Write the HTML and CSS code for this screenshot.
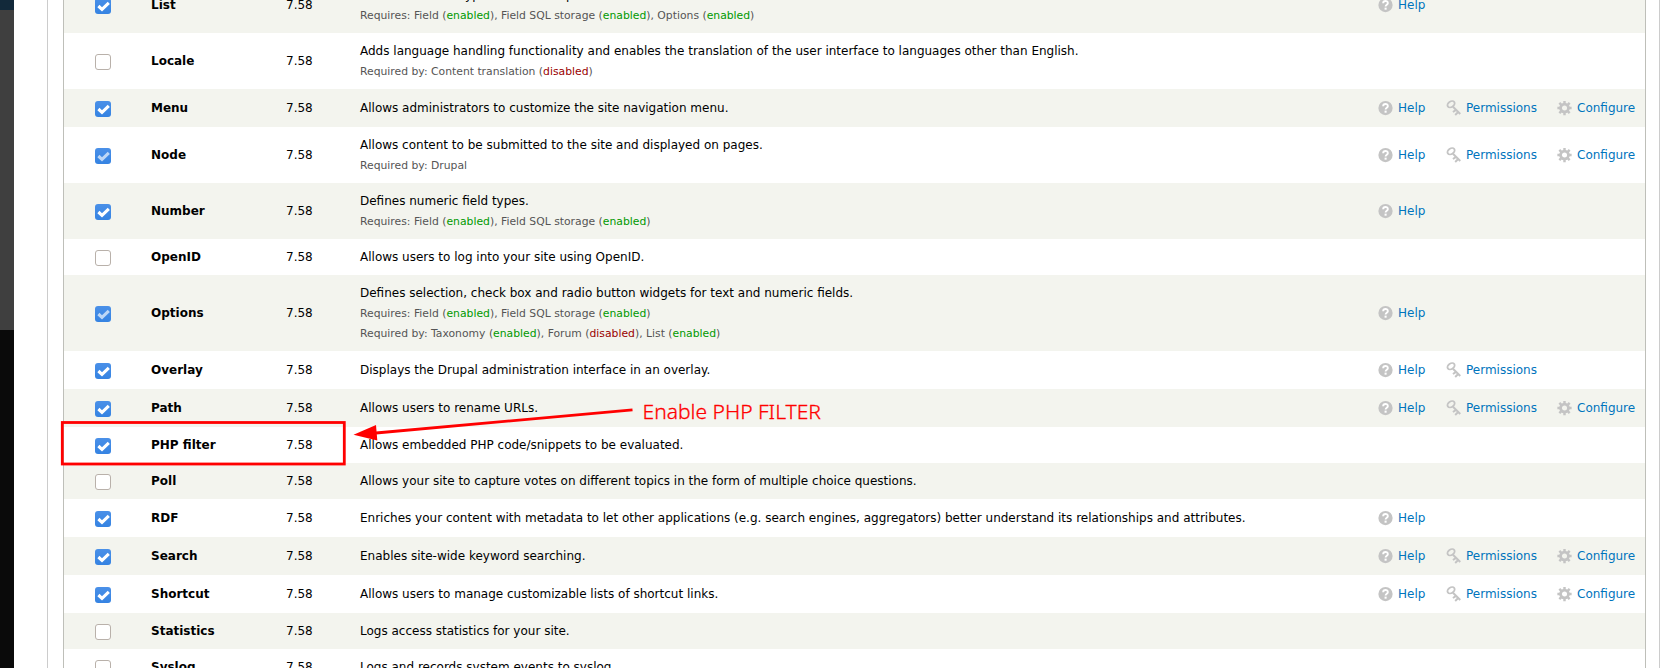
FILE: index.html
```
<!DOCTYPE html>
<html lang="en">
<head>
<meta charset="utf-8">
<title>Modules</title>
<link rel="stylesheet" href="styles.css">
</head>
<body>
<svg class="defs" width="0" height="0">
  <symbol id="tick" viewBox="0 0 16 16"><path d="M3.400 8 7 11.300 13.800 4.900" fill="none" stroke="currentColor" stroke-width="3.100"/></symbol>
  <symbol id="help" viewBox="0 0 16 16"><circle cx="8" cy="8" r="7.6" fill="#c4c4c4"/><path d="M5.5 6.2C5.5 2.900 10.600 3 10.500 6 10.400 7.800 8.100 7.600 8.100 9.700" fill="none" stroke="#fff" stroke-width="2"/><rect x="7" y="10.800" width="2.200" height="2.200" fill="#fff"/></symbol>
  <symbol id="key" viewBox="0 0 16 16"><g fill="none" stroke="#c4c4c4"><ellipse cx="5.400" cy="4" rx="4.200" ry="3" transform="rotate(-35 5.400 4)" stroke-width="1.900"/><path d="M7.400 6.600 15.200 14.400M10.700 10 7.400 12.300M13 12.300 9.800 15.400" stroke-width="2.100"/></g></symbol>
  <symbol id="gear" viewBox="0 0 16 16"><g fill="none" stroke="#c4c4c4"><circle cx="8" cy="8" r="4.200" stroke-width="3"/><path d="M8 .4V3.500M8 12.500V15.600M.4 8H3.500M12.500 8H15.600M2.500 2.500 4.900 4.900M11.100 11.100 13.500 13.500M13.500 2.500 11.100 4.900M4.900 11.100 2.500 13.500" stroke-width="2.600"/></g></symbol>
</svg>
<div class="page">
  <div class="backdrop"><div class="toolbar"></div><div class="shade"></div></div>
  <div class="fieldset">
    <div class="modules">
      <div class="row alt double"><span class="box on"><svg><use href="#tick"/></svg></span><b>List</b><span>7.58</span><div class="desc"><p>Defines list field types. Use with Options to create selection lists.</p><p class="req">Requires: Field (<i class="en">enabled</i>), Field SQL storage (<i class="en">enabled</i>), Options (<i class="en">enabled</i>)</p></div><a><svg><use href="#help"/></svg>Help</a></div>
      <div class="row double"><span class="box"></span><b>Locale</b><span>7.58</span><div class="desc"><p>Adds language handling functionality and enables the translation of the user interface to languages other than English.</p><p class="req">Required by: Content translation (<i class="dis">disabled</i>)</p></div></div>
      <div class="row alt linked"><span class="box on"><svg><use href="#tick"/></svg></span><b>Menu</b><span>7.58</span><div class="desc"><p>Allows administrators to customize the site navigation menu.</p></div><a><svg><use href="#help"/></svg>Help</a><a><svg class="key"><use href="#key"/></svg>Permissions</a><a><svg><use href="#gear"/></svg>Configure</a></div>
      <div class="row double"><span class="box on locked"><svg><use href="#tick"/></svg></span><b>Node</b><span>7.58</span><div class="desc"><p>Allows content to be submitted to the site and displayed on pages.</p><p class="req">Required by: Drupal</p></div><a><svg><use href="#help"/></svg>Help</a><a><svg class="key"><use href="#key"/></svg>Permissions</a><a><svg><use href="#gear"/></svg>Configure</a></div>
      <div class="row alt double"><span class="box on"><svg><use href="#tick"/></svg></span><b>Number</b><span>7.58</span><div class="desc"><p>Defines numeric field types.</p><p class="req">Requires: Field (<i class="en">enabled</i>), Field SQL storage (<i class="en">enabled</i>)</p></div><a><svg><use href="#help"/></svg>Help</a></div>
      <div class="row"><span class="box"></span><b>OpenID</b><span>7.58</span><div class="desc"><p>Allows users to log into your site using OpenID.</p></div></div>
      <div class="row alt triple"><span class="box on locked"><svg><use href="#tick"/></svg></span><b>Options</b><span>7.58</span><div class="desc"><p>Defines selection, check box and radio button widgets for text and numeric fields.</p><p class="req">Requires: Field (<i class="en">enabled</i>), Field SQL storage (<i class="en">enabled</i>)</p><p class="req">Required by: Taxonomy (<i class="en">enabled</i>), Forum (<i class="dis">disabled</i>), List (<i class="en">enabled</i>)</p></div><a><svg><use href="#help"/></svg>Help</a></div>
      <div class="row linked"><span class="box on"><svg><use href="#tick"/></svg></span><b>Overlay</b><span>7.58</span><div class="desc"><p>Displays the Drupal administration interface in an overlay.</p></div><a><svg><use href="#help"/></svg>Help</a><a><svg class="key"><use href="#key"/></svg>Permissions</a></div>
      <div class="row alt linked"><span class="box on"><svg><use href="#tick"/></svg></span><b>Path</b><span>7.58</span><div class="desc"><p>Allows users to rename URLs.</p></div><a><svg><use href="#help"/></svg>Help</a><a><svg class="key"><use href="#key"/></svg>Permissions</a><a><svg><use href="#gear"/></svg>Configure</a></div>
      <div class="row"><span class="box on"><svg><use href="#tick"/></svg></span><b>PHP filter</b><span>7.58</span><div class="desc"><p>Allows embedded PHP code/snippets to be evaluated.</p></div></div>
      <div class="row alt"><span class="box"></span><b>Poll</b><span>7.58</span><div class="desc"><p>Allows your site to capture votes on different topics in the form of multiple choice questions.</p></div></div>
      <div class="row linked"><span class="box on"><svg><use href="#tick"/></svg></span><b>RDF</b><span>7.58</span><div class="desc"><p>Enriches your content with metadata to let other applications (e.g. search engines, aggregators) better understand its relationships and attributes.</p></div><a><svg><use href="#help"/></svg>Help</a></div>
      <div class="row alt linked"><span class="box on"><svg><use href="#tick"/></svg></span><b>Search</b><span>7.58</span><div class="desc"><p>Enables site-wide keyword searching.</p></div><a><svg><use href="#help"/></svg>Help</a><a><svg class="key"><use href="#key"/></svg>Permissions</a><a><svg><use href="#gear"/></svg>Configure</a></div>
      <div class="row linked"><span class="box on"><svg><use href="#tick"/></svg></span><b>Shortcut</b><span>7.58</span><div class="desc"><p>Allows users to manage customizable lists of shortcut links.</p></div><a><svg><use href="#help"/></svg>Help</a><a><svg class="key"><use href="#key"/></svg>Permissions</a><a><svg><use href="#gear"/></svg>Configure</a></div>
      <div class="row alt"><span class="box"></span><b>Statistics</b><span>7.58</span><div class="desc"><p>Logs access statistics for your site.</p></div></div>
      <div class="row"><span class="box"></span><b>Syslog</b><span>7.58</span><div class="desc"><p>Logs and records system events to syslog.</p></div></div>
    </div>
  </div>
  <svg class="annotation" viewBox="0 0 1680 668">
    <rect x="62.300" y="422.500" width="282" height="41.500" fill="none" stroke="#f00" stroke-width="2.800"/>
    <path d="M632.500 409.800 376 433" stroke="#f00" stroke-width="2.800"/>
    <path d="M353.500 434.700 376 425 377.300 440.500Z" fill="#f00"/>
    <text x="642.500" y="419" textLength="178.500" lengthAdjust="spacingAndGlyphs">Enable PHP FILTER</text>
  </svg>
</div>
</body>
</html>
```
FILE: styles.css
```
body {
  margin: 0;
  background: #fff;
  color: #000;
  font: 12px/20px "DejaVu Sans", sans-serif;
}
.defs { display: block; }
.page {
  position: relative;
  display: flex;
  width: 1680px;
  height: 668px;
  overflow: hidden;
}
.backdrop {
  width: 14px;
  flex: none;
  background: #0a0a0a;
}
.toolbar { height: 10px; background: #12293a; }
.shade { height: 320px; background: #3f3f3f; }
.fieldset {
  flex: none;
  box-sizing: border-box;
  width: 1613px;
  margin-left: 33px;
  padding: 0 13px 0 15px;
  border: solid #ccc;
  border-width: 0 1px;
}
.modules {
  margin-top: -23px;
  border: solid #bebfb9;
  border-width: 0 1px;
}
.row {
  display: grid;
  grid-template-columns: 56px 135px 74px 1018px 68px 111px 1fr;
  align-items: center;
  height: 36px;
  padding-left: 31px;
}
.linked { height: 38px; }
.double { height: 56px; }
.triple { height: 76px; }
.alt { background: #f3f4ee; }
.desc p { margin: 0; white-space: nowrap; }
.desc .req { padding-top: 1px; margin-bottom: -1px; color: #555; font-size: 10.8px; }
.req i { font-style: normal; }
.en { color: #090; }
.dis { color: #900; }
.box {
  box-sizing: border-box;
  width: 16px;
  height: 16px;
  margin-top: 2px;
  border: 1px solid #b9b1aa;
  border-radius: 3px;
  background: #fff;
  color: #fff;
}
.box.on {
  border: 0;
  background: linear-gradient(#4a90e8, #3583e2);
}
.box.locked { color: #bdd7f6; }
.box svg { display: block; width: 16px; height: 16px; }
.row a {
  display: flex;
  align-items: center;
  gap: 5px;
  color: #0074bd;
}
a svg { width: 15px; height: 16px; }
.annotation {
  position: absolute;
  left: 0;
  top: 0;
  width: 1680px;
  height: 668px;
}
.annotation text {
  fill: #f00;
  stroke: #f00;
  stroke-width: .3px;
  font: 300 20px "Noto Sans", "Open Sans", sans-serif;
}
```
